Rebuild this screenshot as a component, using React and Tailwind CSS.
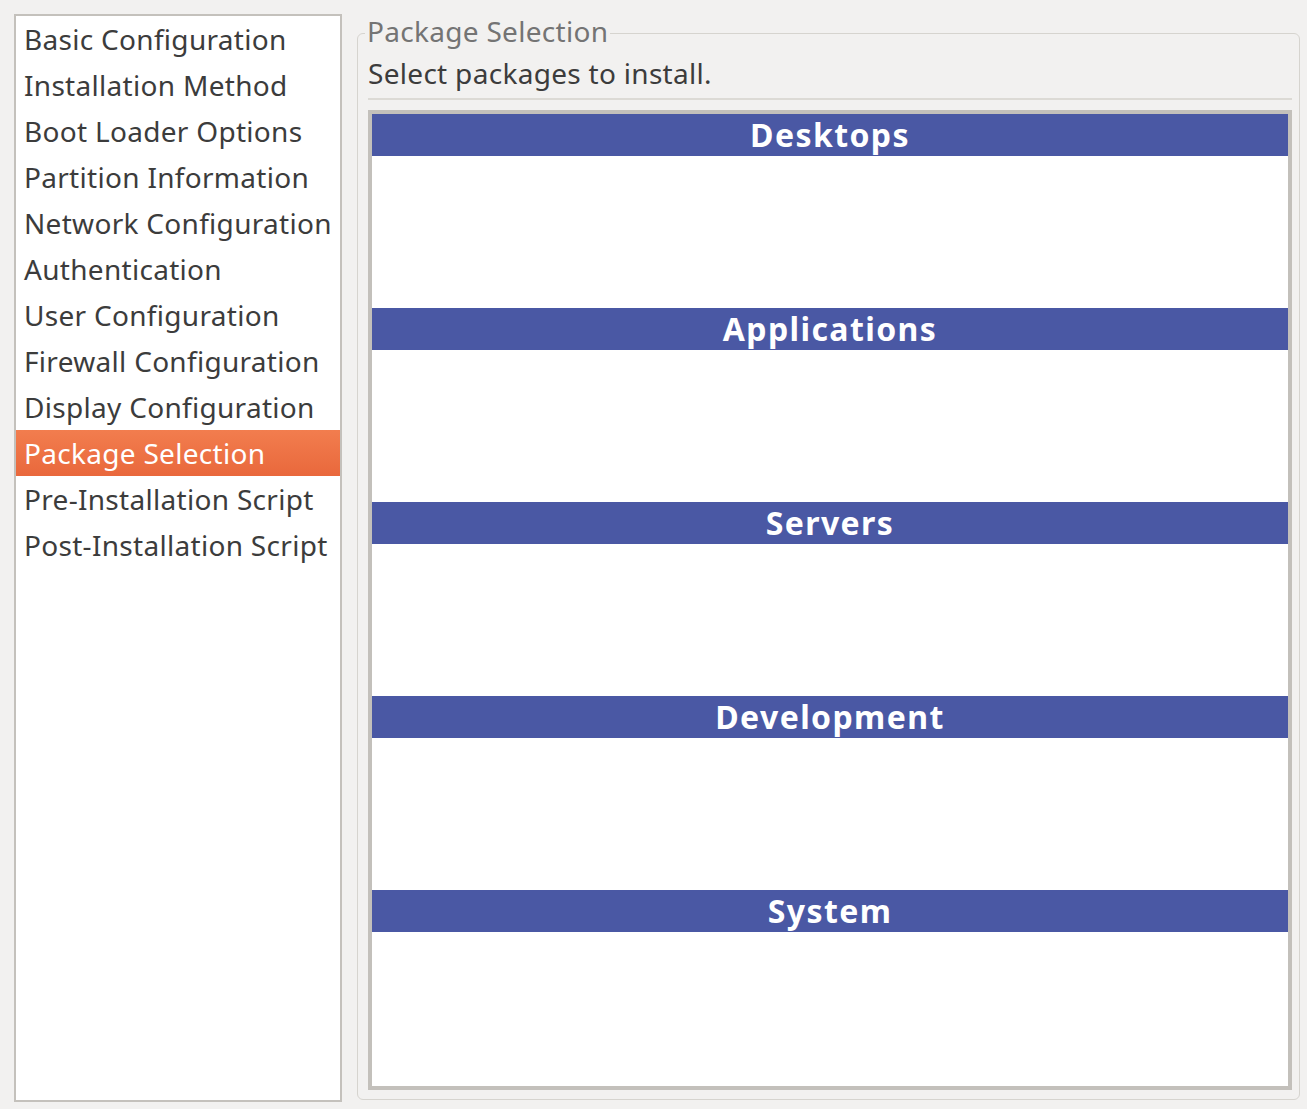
import React from "react";

const steps = [
  "Basic Configuration",
  "Installation Method",
  "Boot Loader Options",
  "Partition Information",
  "Network Configuration",
  "Authentication",
  "User Configuration",
  "Firewall Configuration",
  "Display Configuration",
  "Package Selection",
  "Pre-Installation Script",
  "Post-Installation Script",
];

const groups = ["Desktops", "Applications", "Servers", "Development", "System"];

const StepList = ({ selected }) => (
  <div className="w-[328px] h-[1088px] shrink-0 border-2 border-[#c4c1bc] bg-white">
    {steps.map((step) => (
      <div
        key={step}
        className={`h-[46px] flex items-center pl-[8px] text-[28px] tracking-[0.3px] whitespace-nowrap ${
          step === selected
            ? "bg-gradient-to-b from-[#f27d4e] to-[#e9683c] text-white"
            : "text-[#3c3c3c]"
        }`}
      >
        {step}
      </div>
    ))}
  </div>
);

const GroupSection = ({ name }) => (
  <div className="h-[194px] shrink-0 flex flex-col">
    <div className="h-[42px] bg-[#4a58a4] flex items-center justify-center text-white font-bold text-[32px] tracking-[1.4px]">
      {name}
    </div>
  </div>
);

export default function App() {
  return (
    <div
      className="w-[1307px] h-[1109px] bg-[#f2f1f0] flex pt-[14px] pl-[14px] gap-[15px] overflow-hidden"
      style={{ fontFamily: '"Noto Sans", "Open Sans", sans-serif' }}
    >
      <StepList selected="Package Selection" />
      <div className="relative mt-[19px] w-[943px] h-[1067px] border border-[#d6d4cf] rounded-[6px] pl-[10px] pr-[7px] pt-[22px]">
        <div className="absolute -top-[21px] left-[7px] px-[2px] bg-[#f2f1f0] text-[#747474] text-[28px] tracking-[0.3px] leading-[36px]">
          Package Selection
        </div>
        <div className="text-[28px] tracking-[0.3px] text-[#3c3c3c] leading-[34px]">
          Select packages to install.
        </div>
        <div className="h-[2px] bg-[#dcdad5] mt-[8px] mb-[10px]"></div>
        <div className="h-[980px] border-4 border-[#c3c0bb] bg-white flex flex-col">
          {groups.map((g) => (
            <GroupSection key={g} name={g} />
          ))}
        </div>
      </div>
    </div>
  );
}
